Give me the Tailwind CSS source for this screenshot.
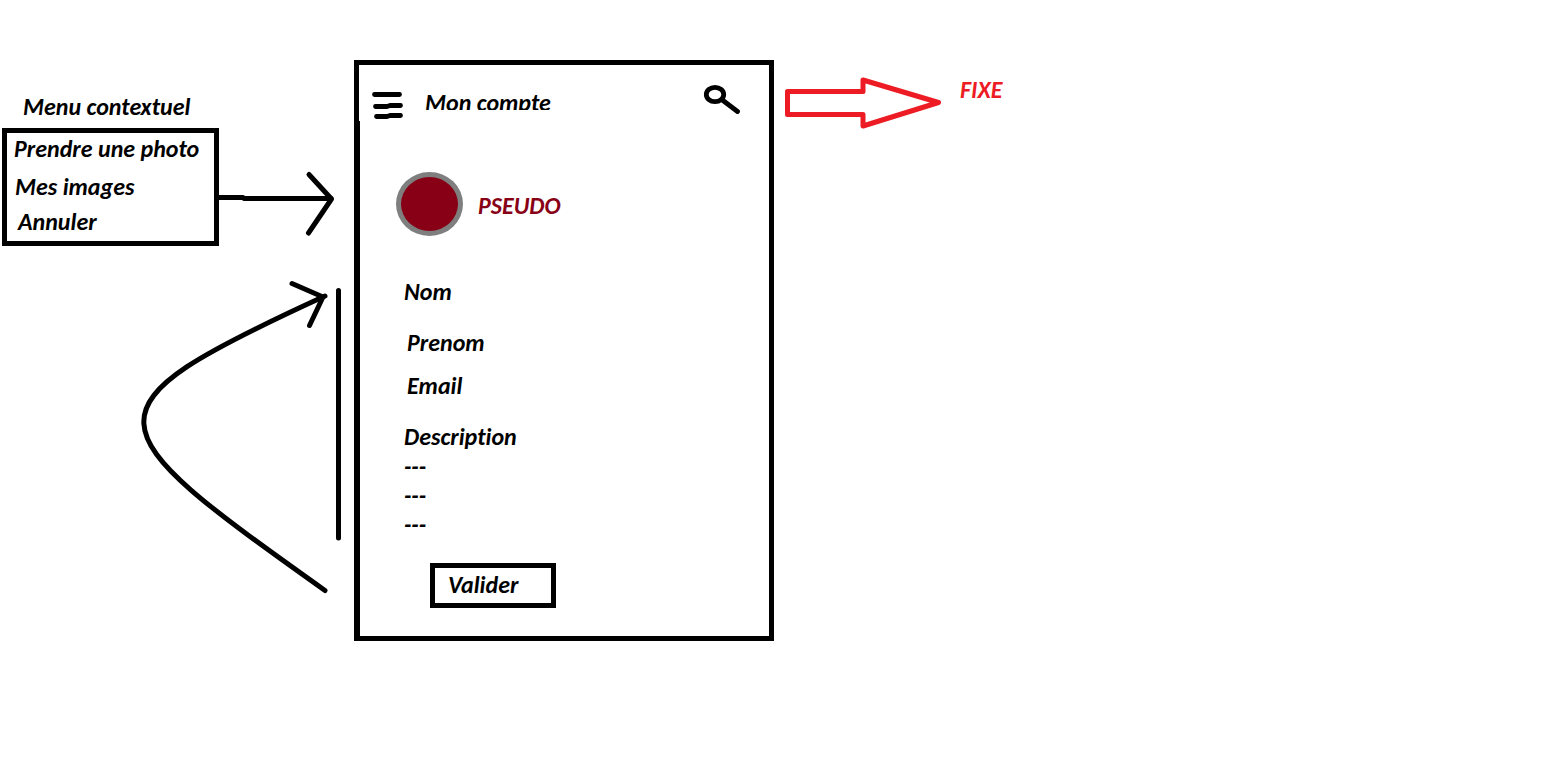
<!DOCTYPE html>
<html lang="fr">
<head>
<meta charset="utf-8">
<meta name="viewport" content="width=device-width, initial-scale=1">
<title>Mon compte</title>
<script src="https://cdn.jsdelivr.net/npm/@tailwindcss/browser@4"></script>
</head>
<body class="min-h-screen bg-white font-[Calibri,Carlito,Lato,sans-serif] text-2xl leading-7 font-bold text-black italic [font-variant-ligatures:none]">
<div class="flex items-start">

  <!-- Contextual menu and flow arrows -->
  <aside class="w-[354px] shrink-0 pt-[93px]">
    <h2 class="pl-[23px]">Menu contextuel</h2>
    <div class="mt-[7px] flex items-start pl-[2px]">
      <div class="flex w-[217px] shrink-0 flex-col items-start border-5 border-black pt-[2px] pb-[5px] pl-[7px]">
        <button type="button" class="whitespace-nowrap">Prendre une photo</button>
        <button type="button" class="mt-[10px] pl-px">Mes images</button>
        <button type="button" class="mt-[7px] pl-1">Annuler</button>
      </div>
      <svg class="mt-[42px] h-[68px] w-[120px] shrink-0 fill-none stroke-black" viewBox="219 170 120 68" stroke-width="5" stroke-linecap="round" stroke-linejoin="round" aria-hidden="true">
        <path d="M218 197.500 243 197.500 244 198.500 331 198.500"/>
        <path d="M309 174.500 331.500 199 308.500 233"/>
      </svg>
    </div>
    <svg class="mt-[34px] h-[320px] w-[354px] fill-none stroke-black" viewBox="0 280 354 320" stroke-width="5" stroke-linecap="round" stroke-linejoin="round" aria-hidden="true">
      <path d="M325 590.500C91 424 76 410 325 296"/>
      <path d="M292 283.500 323 297 309.500 325.500"/>
      <path d="M338.500 290.500V538"/>
    </svg>
  </aside>

  <!-- Account screen -->
  <main class="mt-[60px] w-[420px] shrink-0 border-y-5 border-r-5 border-black">
    <header class="flex h-14 items-start border-l-5 border-black pr-7">
      <button type="button" aria-label="Menu" class="mt-6 ml-3">
        <svg class="h-8 w-9 fill-none stroke-black" viewBox="371 89 36 32" stroke-width="4.800" stroke-linecap="round" stroke-linejoin="round" aria-hidden="true">
          <path d="M374.500 94.500H399.500M375.500 106.500H387L390 105.500H400.500M376.500 116.500H387L390 115.500H400.500"/>
        </svg>
      </button>
      <h1 class="mt-6 ml-[18px] h-[21px] overflow-hidden">Mon compte</h1>
      <button type="button" aria-label="Rechercher" class="mt-[17px] ml-auto">
        <svg class="h-8 w-[38px] fill-none stroke-black" viewBox="703 82 38 32" stroke-width="4.800" stroke-linecap="round" aria-hidden="true">
          <ellipse cx="715" cy="94.500" rx="8.700" ry="7.200"/>
          <path d="M723 100.500 737.500 111.500"/>
        </svg>
      </button>
    </header>

    <div class="border-l-6 border-black pt-[51px] pb-7 pl-9">
      <div class="flex items-center gap-[15px]">
        <div class="h-16 w-[67px] rounded-[50%] border-5 border-[#7f7f7f] bg-[#880015]"></div>
        <p class="pt-1 text-[#880015]">PSEUDO</p>
      </div>

      <form class="mt-[42px] pl-2">
        <div class="flex">
          <label for="nom">Nom</label>
          <input id="nom" class="ml-3 min-w-0 flex-1 outline-none">
        </div>
        <div class="mt-[23px] flex pl-[3px]">
          <label for="prenom">Prenom</label>
          <input id="prenom" class="ml-3 min-w-0 flex-1 outline-none">
        </div>
        <div class="mt-[15px] flex pl-[3px]">
          <label for="email">Email</label>
          <input id="email" type="email" class="ml-3 min-w-0 flex-1 outline-none">
        </div>
        <label for="description" class="mt-[23px] block">Description</label>
        <textarea id="description" rows="3" class="mt-px block w-full resize-none overflow-hidden leading-[29px] outline-none">---
---
---</textarea>
        <button type="submit" class="mt-6 ml-[26px] block w-[126px] border-5 border-black pt-[3px] pb-1 pl-[13px] text-left">Valider</button>
      </form>
    </div>
  </main>

  <!-- Note about the fixed header -->
  <aside class="flex items-start pt-[76px] pl-[10px] text-[#ed1c24]">
    <svg class="h-[54px] w-40 shrink-0 fill-none stroke-[#ed1c24]" viewBox="784 76 160 54" stroke-width="5" stroke-linejoin="round" aria-hidden="true">
      <path d="M787.500 91.500H863V80L938.500 102.500 863 126V114.500H787.500Z"/>
    </svg>
    <p class="pl-4">FIXE</p>
  </aside>

</div>
</body>
</html>
